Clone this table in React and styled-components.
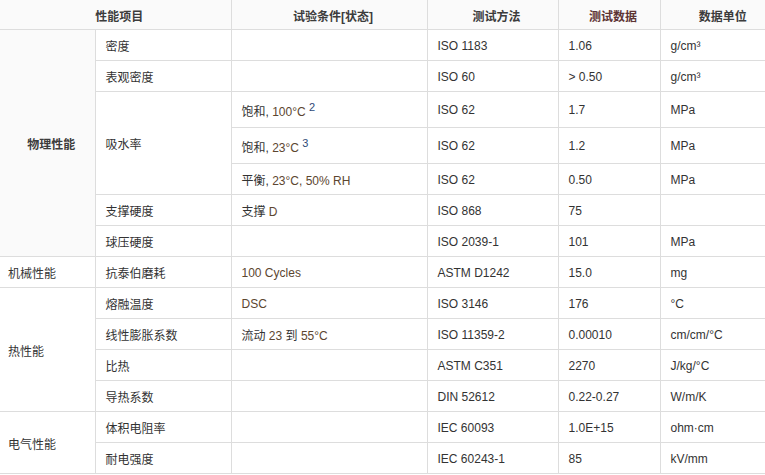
import React from "react";
import styled, { createGlobalStyle } from "styled-components";

const GlobalStyle = createGlobalStyle`
  html, body {
    margin: 0;
    padding: 0;
    background: #ffffff;
    overflow: hidden;
  }
  body {
    font-family: "Liberation Sans", "Noto Sans CJK SC", sans-serif;
    font-size: 12px;
    color: #333333;
  }
`;

const Table = styled.table`
  width: 777px;
  border-collapse: collapse;
  table-layout: fixed;
  font-size: 12px;
`;

const HeadCell = styled.th`
  height: 28px;
  padding: 1px 0 0 8px;
  background: #fafafa;
  border-bottom: 1px solid #dddddd;
  border-left: 1px solid #dddddd;
  text-align: center;
  font-weight: bold;
  color: ${(p) => (p.$accent ? "#5e3434" : "#3c3c3c")};
  &:first-child {
    border-left: none;
  }
`;

const GroupCell = styled.td`
  padding: 1px 0 0 8px;
  border-bottom: 1px solid #dddddd;
  background: ${(p) => (p.$strong ? "#fafafa" : "#ffffff")};
  font-weight: ${(p) => (p.$strong ? "bold" : "normal")};
  text-align: ${(p) => (p.$strong ? "center" : "left")};
  color: ${(p) => (p.$strong ? "#3c3c3c" : "#333333")};
`;

const Cell = styled.td`
  height: ${(p) => (p.$tall ? "34px" : "29px")};
  padding: 1px 10px 0;
  border-bottom: 1px solid #dddddd;
  border-left: 1px solid #dddddd;
  white-space: nowrap;
  vertical-align: middle;
`;

const Latin = styled.span`
  color: #5c4630;
`;

const Note = styled.sup`
  font-size: 11px;
  color: #2f4a78;
  vertical-align: 5px;
  line-height: 0;
`;

const cols = [95, 136, 196, 131, 102, 117];

const physical = [
  { name: "密度", method: "ISO 1183", value: "1.06", unit: "g/cm³" },
  { name: "表观密度", method: "ISO 60", value: "> 0.50", unit: "g/cm³" },
];

function Condition({ zh, latin, note }) {
  return (
    <>
      {zh}
      {latin && <Latin>{latin}</Latin>}
      {note && (
        <>
          {" "}
          <Note>{note}</Note>
        </>
      )}
    </>
  );
}

export default function App() {
  return (
    <>
      <GlobalStyle />
      <Table>
        <colgroup>
          {cols.map((w, i) => (
            <col key={i} style={{ width: w }} />
          ))}
        </colgroup>
        <thead>
          <tr>
            <HeadCell colSpan={2}>性能项目</HeadCell>
            <HeadCell>试验条件[状态]</HeadCell>
            <HeadCell>测试方法</HeadCell>
            <HeadCell $accent>测试数据</HeadCell>
            <HeadCell>数据单位</HeadCell>
          </tr>
        </thead>
        <tbody>
          {physical.map((r, i) => (
            <tr key={r.name}>
              {i === 0 && (
                <GroupCell rowSpan={7} $strong>
                  物理性能
                </GroupCell>
              )}
              <Cell>{r.name}</Cell>
              <Cell></Cell>
              <Cell>{r.method}</Cell>
              <Cell>{r.value}</Cell>
              <Cell>{r.unit}</Cell>
            </tr>
          ))}
          <tr>
            <Cell rowSpan={3}>吸水率</Cell>
            <Cell $tall>
              <Condition zh="饱和, " latin="100°C" note="2" />
            </Cell>
            <Cell $tall>ISO 62</Cell>
            <Cell $tall>1.7</Cell>
            <Cell $tall>MPa</Cell>
          </tr>
          <tr>
            <Cell $tall>
              <Condition zh="饱和, " latin="23°C" note="3" />
            </Cell>
            <Cell $tall>ISO 62</Cell>
            <Cell $tall>1.2</Cell>
            <Cell $tall>MPa</Cell>
          </tr>
          <tr>
            <Cell>
              <Condition zh="平衡, " latin="23°C, 50% RH" />
            </Cell>
            <Cell>ISO 62</Cell>
            <Cell>0.50</Cell>
            <Cell>MPa</Cell>
          </tr>
          <tr>
            <Cell>支撑硬度</Cell>
            <Cell>
              <Condition zh="支撑 " latin="D" />
            </Cell>
            <Cell>ISO 868</Cell>
            <Cell>75</Cell>
            <Cell></Cell>
          </tr>
          <tr>
            <Cell>球压硬度</Cell>
            <Cell></Cell>
            <Cell>ISO 2039-1</Cell>
            <Cell>101</Cell>
            <Cell>MPa</Cell>
          </tr>
          <tr>
            <GroupCell>机械性能</GroupCell>
            <Cell>抗泰伯磨耗</Cell>
            <Cell>
              <Latin>100 Cycles</Latin>
            </Cell>
            <Cell>ASTM D1242</Cell>
            <Cell>15.0</Cell>
            <Cell>mg</Cell>
          </tr>
          <tr>
            <GroupCell rowSpan={4}>热性能</GroupCell>
            <Cell>熔融温度</Cell>
            <Cell>
              <Latin>DSC</Latin>
            </Cell>
            <Cell>ISO 3146</Cell>
            <Cell>176</Cell>
            <Cell>°C</Cell>
          </tr>
          <tr>
            <Cell>线性膨胀系数</Cell>
            <Cell>
              流动 <Latin>23</Latin> 到 <Latin>55°C</Latin>
            </Cell>
            <Cell>ISO 11359-2</Cell>
            <Cell>0.00010</Cell>
            <Cell>cm/cm/°C</Cell>
          </tr>
          <tr>
            <Cell>比热</Cell>
            <Cell></Cell>
            <Cell>ASTM C351</Cell>
            <Cell>2270</Cell>
            <Cell>J/kg/°C</Cell>
          </tr>
          <tr>
            <Cell>导热系数</Cell>
            <Cell></Cell>
            <Cell>DIN 52612</Cell>
            <Cell>0.22-0.27</Cell>
            <Cell>W/m/K</Cell>
          </tr>
          <tr>
            <GroupCell rowSpan={2}>电气性能</GroupCell>
            <Cell>体积电阻率</Cell>
            <Cell></Cell>
            <Cell>IEC 60093</Cell>
            <Cell>1.0E+15</Cell>
            <Cell>ohm·cm</Cell>
          </tr>
          <tr>
            <Cell>耐电强度</Cell>
            <Cell></Cell>
            <Cell>IEC 60243-1</Cell>
            <Cell>85</Cell>
            <Cell>kV/mm</Cell>
          </tr>
        </tbody>
      </Table>
    </>
  );
}
